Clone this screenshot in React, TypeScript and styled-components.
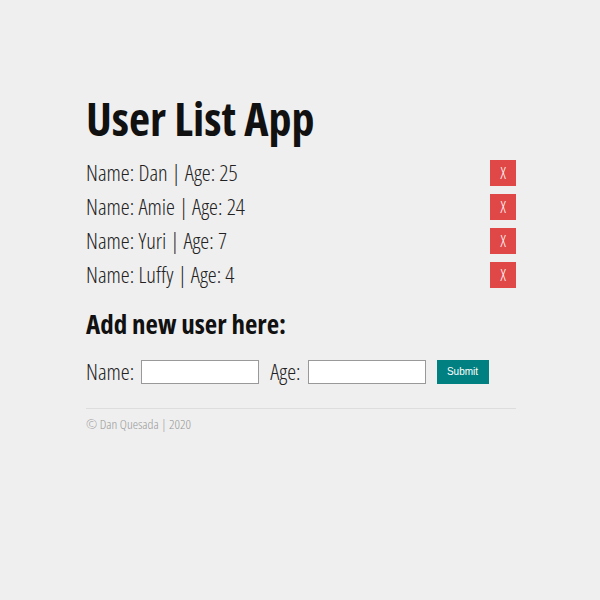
import React, { useState } from 'react';
import styled, { createGlobalStyle } from 'styled-components';

const GlobalStyle = createGlobalStyle`
  html, body {
    margin: 0;
    padding: 0;
    background: #efefef;
  }
  body {
    font-family: "Open Sans", "DejaVu Sans", sans-serif;
    font-stretch: 75%;
    font-weight: 300;
    color: #222;
  }
`;

const Page = styled.div`
  width: 430px;
  margin: 0 auto;
  padding-top: 91px;
  transform: translateX(1px);
`;

const Title = styled.h1`
  margin: 0 0 10px;
  font-size: 46px;
  font-weight: 700;
  line-height: 54px;
  color: #111;
`;

const UserList = styled.ul`
  list-style: none;
  margin: 0;
  padding: 0;
`;

const UserRow = styled.li`
  display: flex;
  align-items: center;
  justify-content: space-between;
  height: 34px;
  font-size: 22.5px;
  color: #222;
`;

const DeleteButton = styled.button`
  width: 26px;
  height: 26px;
  border: none;
  padding: 0;
  margin-top: 2px;
  background: #e04848;
  color: #fff;
  font-family: "Open Sans", sans-serif;
  font-stretch: 75%;
  font-weight: 300;
  font-size: 16px;
`;

const SubTitle = styled.h2`
  margin: 16px 0 15px;
  font-size: 27px;
  font-weight: 700;
  line-height: 34px;
  color: #111;
`;

const Form = styled.form`
  display: flex;
  align-items: center;
  font-size: 22.5px;
  color: #222;
`;

const Label = styled.label`
  margin-right: 7px;
`;

const Input = styled.input`
  width: 118px;
  height: 24px;
  box-sizing: border-box;
  border: 1px solid #999;
  background: #fff;
  margin-right: 11px;
`;

const SubmitButton = styled.button`
  width: 52px;
  height: 24px;
  border: none;
  background: #008080;
  color: #fff;
  font-family: "Liberation Sans", Arial, sans-serif;
  font-size: 10px;
`;

const Rule = styled.hr`
  margin: 21px 0 6px;
  border: none;
  border-top: 1px solid #ddd;
`;

const Footer = styled.p`
  margin: 0;
  font-size: 13.5px;
  color: #999;
`;

interface User {
  name: string;
  age: number;
}

const App: React.FC = () => {
  const [users, setUsers] = useState<User[]>([
    { name: 'Dan', age: 25 },
    { name: 'Amie', age: 24 },
    { name: 'Yuri', age: 7 },
    { name: 'Luffy', age: 4 },
  ]);

  return (
    <Page>
      <GlobalStyle />
      <Title>User List App</Title>
      <UserList>
        {users.map((user, index) => (
          <UserRow key={index}>
            <span>
              Name: {user.name} | Age: {user.age}
            </span>
            <DeleteButton onClick={() => setUsers(users.filter((_, i) => i !== index))}>X</DeleteButton>
          </UserRow>
        ))}
      </UserList>

      <SubTitle>Add new user here:</SubTitle>
      <Form onSubmit={(e) => e.preventDefault()}>
        <Label>Name:</Label>
        <Input type="text" />
        <Label>Age:</Label>
        <Input type="text" />
        <SubmitButton type="submit">Submit</SubmitButton>
      </Form>

      <Rule />
      <Footer>© Dan Quesada | 2020</Footer>
    </Page>
  );
};

export default App;
